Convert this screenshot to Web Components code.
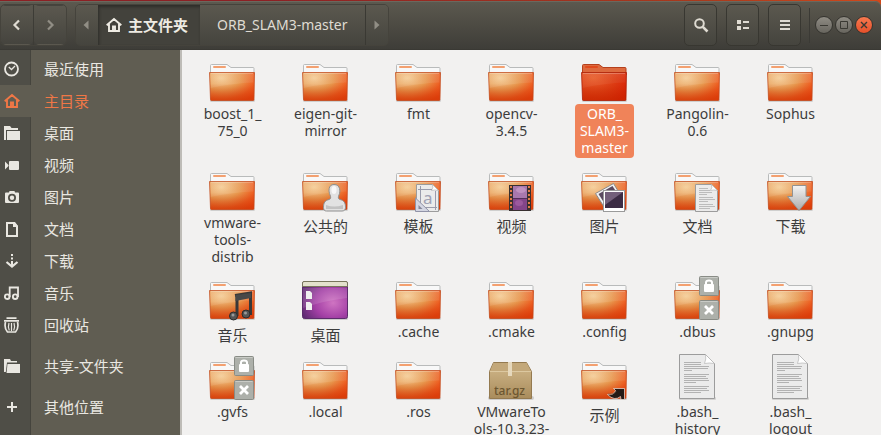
<!DOCTYPE html>
<html lang="zh-CN">
<head>
<meta charset="utf-8">
<title>主文件夹</title>
<style>
html, body { height: 100%; }
body {
   margin: 0;
   overflow: hidden;
   background: linear-gradient(90deg, #8c2024, #8c2024 30%, #a93a1c 80%, #d2481a);
   font: 15px/22px "Noto Sans", "Noto Sans CJK SC", sans-serif;
   color: #3c3c3c;
}
</style>
</head>
<body>

<file-window>
   <header-bar slot="header">
      <tool-button slot="nav" icon="back" label="后退"></tool-button>
      <tool-button slot="nav" icon="forward" label="前进" dim></tool-button>
      <path-bar slot="path">
         <path-button icon="prev" label="上一个"></path-button>
         <path-button icon="home" active>主文件夹</path-button>
         <path-button wide>ORB_SLAM3-master</path-button>
         <path-button icon="next" label="下一个"></path-button>
      </path-bar>
      <tool-button slot="tools" icon="search" label="搜索"></tool-button>
      <tool-button slot="tools" icon="list" label="列表视图"></tool-button>
      <tool-button slot="tools" icon="menu" label="菜单"></tool-button>
      <window-button slot="window" icon="minimize" label="最小化"></window-button>
      <window-button slot="window" icon="maximize" label="最大化"></window-button>
      <window-button slot="window" icon="close" label="关闭" close></window-button>
   </header-bar>

   <side-bar slot="side">
      <side-item icon="recent">最近使用</side-item>
      <side-item icon="home" active>主目录</side-item>
      <side-item icon="folder">桌面</side-item>
      <side-item icon="video">视频</side-item>
      <side-item icon="camera">图片</side-item>
      <side-item icon="doc">文档</side-item>
      <side-item icon="download">下载</side-item>
      <side-item icon="music">音乐</side-item>
      <side-item icon="trash">回收站</side-item>
      <side-item icon="share" apart>共享-文件夹</side-item>
      <side-item icon="plus" apart>其他位置</side-item>
   </side-bar>

   <file-grid>
      <file-item>boost_1_<br>75_0</file-item>
      <file-item>eigen-git-<br>mirror</file-item>
      <file-item>fmt</file-item>
      <file-item>opencv-<br>3.4.5</file-item>
      <file-item selected>ORB_<br>SLAM3-<br>master</file-item>
      <file-item>Pangolin-<br>0.6</file-item>
      <file-item>Sophus</file-item>

      <file-item>vmware-<br>tools-<br>distrib</file-item>
      <file-item mark="person" cjk>公共的</file-item>
      <file-item mark="template" cjk>模板</file-item>
      <file-item mark="film" cjk>视频</file-item>
      <file-item mark="photos" cjk>图片</file-item>
      <file-item mark="page" cjk>文档</file-item>
      <file-item mark="arrow" cjk>下载</file-item>

      <file-item mark="notes" cjk>音乐</file-item>
      <file-item kind="desktop" cjk>桌面</file-item>
      <file-item>.cache</file-item>
      <file-item>.cmake</file-item>
      <file-item>.config</file-item>
      <file-item mark="locked">.dbus</file-item>
      <file-item>.gnupg</file-item>

      <file-item mark="locked">.gvfs</file-item>
      <file-item>.local</file-item>
      <file-item>.ros</file-item>
      <file-item kind="archive">VMwareTo<br>ols-10.3.23-</file-item>
      <file-item mark="link" cjk>示例</file-item>
      <file-item kind="text">.bash_<br>history</file-item>
      <file-item kind="text">.bash_<br>logout</file-item>
   </file-grid>
</file-window>

<script>
// symbolic icons, 16x16, painted with currentColor
const icons = {
   back: `<path d="M10 3.500 5.500 8l4.500 4.500" fill="none" stroke="currentColor" stroke-width="2.200"/>`,
   forward: `<path d="M6 3.500 10.500 8 6 12.500" fill="none" stroke="currentColor" stroke-width="2.200"/>`,
   prev: `<path d="M9.500 3.500v9L4.500 8z" fill="currentColor"/>`,
   next: `<path d="M5.500 3.500v9l5-4.500z" fill="currentColor"/>`,
   home: `<path d="M.7 8.300 8 2l7.300 6.300M3 7v7h10V7M7 14V9.500h2V14" fill="none" stroke="currentColor" stroke-width="1.900"/>`,
   search: `<circle cx="6.500" cy="6.500" r="4.300" fill="none" stroke="currentColor" stroke-width="2"/><path d="m9.800 9.800 4.700 4.700" stroke="currentColor" stroke-width="2.600"/>`,
   list: `<path d="M2 3h4v4H2zM2 9h4v4H2zM8 4h6v2H8zM8 10h6v2H8z" fill="currentColor"/>`,
   menu: `<path d="M3 3h10v2H3zM3 7h10v2H3zM3 11h10v2H3z" fill="currentColor"/>`,
   minimize: `<path d="M4 8.500h8" stroke="currentColor"/>`,
   maximize: `<path d="M4.500 4.500h7v7h-7z" fill="none" stroke="currentColor"/>`,
   close: `<path d="m5 5 6 6M11 5l-6 6" stroke="currentColor" stroke-width="1.400"/>`,
   recent: `<circle cx="7.500" cy="8" r="6.500" fill="none" stroke="currentColor" stroke-width="1.800"/><path d="m4.800 6 2.700 2.500L11 5" fill="none" stroke="currentColor" stroke-width="1.300"/>`,
   folder: `<path d="M0 1h6l1.500 2H14v2H2v10H0z" fill="currentColor"/><path d="M3 6h13v9H3z" fill="currentColor"/>`,
   video: `<rect x="5" y="4" width="10" height="9" rx="1" fill="currentColor"/><path d="M1 4.500 4.500 8v1L1 12.500z" fill="currentColor"/>`,
   camera: `<path fill-rule="evenodd" d="M2 3.500h3L5.500 2h5l.5 1.500h3q1 0 1 1V13q0 1-1 1H2q-1 0-1-1V4.500q0-1 1-1zM8 4.700a4 4 0 1 0 0 8 4 4 0 0 0 0-8z" fill="currentColor"/><circle cx="8" cy="8.700" r="2.200" fill="currentColor"/>`,
   doc: `<path d="M3 2h6.500L13 5.500V15H3z" fill="none" stroke="currentColor" stroke-width="2"/><path d="M9 1h2l3 4v1H9z" fill="currentColor"/>`,
   download: `<path d="M7 1h2v2H7zM7 4.500h2v2H7zM7 8h2v4H7z" fill="currentColor"/><path d="M2.500 9 8 13.500 13.500 9" fill="none" stroke="currentColor" stroke-width="2.200"/>`,
   music: `<circle cx="3.200" cy="11.700" r="2.300" fill="none" stroke="currentColor" stroke-width="1.900"/><circle cx="11.200" cy="11.700" r="2.300" fill="none" stroke="currentColor" stroke-width="1.900"/><path d="M5.700 12V2.500h8.300V12" fill="none" stroke="currentColor" stroke-width="1.800"/>`,
   trash: `<path d="M0 3.800h15M2.500 1.200h10" stroke="currentColor" stroke-width="1.800"/><path d="M1.500 5Q0 11 3.500 15h8Q15 11 13.500 5" fill="none" stroke="currentColor" stroke-width="1.700"/><path d="M5 6Q3.700 10 5.300 13.500M10 6q1.300 4-.3 7.500M7.500 6v8" fill="none" stroke="currentColor" stroke-width="1.200"/>`,
   share: `<path d="M0 1h6l1 2h6v1.500H3L1.800 14H0z" fill="currentColor"/><path d="M3.500 6H16v9H2.500z" fill="currentColor"/>`,
   plus: `<path d="M8 3v10M3 8h10" stroke="currentColor" stroke-width="2"/>`
};

const svgIcon = name => name ? `<svg viewBox="0 0 16 16" width="16" height="16" aria-hidden="true">${icons[name]}</svg>` : "";

// full colour pictures, 47x48
const folder = selected => `
<defs>
   <radialGradient id="front" cx=".26" cy=".2" r=".95">
      ${selected
         ? `<stop offset="0" stop-color="#e85f2c"/><stop offset=".55" stop-color="#dc3a12"/><stop offset="1" stop-color="#d81a02"/>`
         : `<stop offset="0" stop-color="#f5cf98"/><stop offset=".45" stop-color="#e8984e"/><stop offset=".8" stop-color="#ee5c20"/><stop offset="1" stop-color="#f04812"/>`}
   </radialGradient>
   <linearGradient id="shade" x2="0" y2="1">
      <stop offset="0" stop-color="#fff" stop-opacity=".08"/>
      <stop offset=".4" stop-color="#c03000" stop-opacity="0"/>
      <stop offset="1" stop-color="#c03000" stop-opacity=".5"/>
   </linearGradient>
</defs>
<rect x="1" y="44" width="45" height="3" rx="1.500" fill="#000" opacity=".14"/>
<path d="M1.500 20V10.500q0-1 1-1H18l4 3h22q1 0 1 1V20z" fill="${selected ? "#dd6a3e" : "#f8f8f8"}" stroke="${selected ? "#b5401c" : "#b9bbbb"}"/>
<rect x="4" y="11" width="13" height="2" rx="1" fill="${selected ? "#e04a1c" : "#f3a070"}"/>
<path d="M.5 17.500h45l-.5 27q0 1-1 1H2.500q-1 0-1-1z" fill="url(#front)"/>
<path d="M.5 17.500h45l-.5 27q0 1-1 1H2.500q-1 0-1-1z" fill="url(#shade)" stroke="${selected ? "#a81e06" : "#c04a1c"}" stroke-opacity=".75"/>
<path d="M1.500 18.500h43v9Q25 28 1.500 33z" fill="#fff" opacity="${selected ? ".05" : ".09"}"/>
<path d="M2 18.500h42" stroke="#fff" opacity=".25"/>`;

const page = (x, y, w, h, fold) => `
<path d="M${x} ${y}h${w - fold}l${fold} ${fold}v${h - fold}h${-w}z" fill="#ebebeb" stroke="#9c9c9c"/>
<path d="M${x + w - fold} ${y}q1 ${fold / 2} -1 ${fold}q${fold / 2}-1 ${fold + 1} 0z" fill="#fff" stroke="#b4b4b4" stroke-width=".7"/>`;

const marks = {
   person: `<path d="M32 20.500c-6 0-5.500 7-4 10.500 1 2 1 4-1 4.500-4 1-5.500 3-5.500 8 0 2.500 1 3.500 3 3.500h15.500c2 0 3.500-1 3.500-3.500 0-5-1.500-7-5.500-8-2-.5-2-2.500-1-4.500 1.500-3.500 1.500-10.500-5-10.500z" fill="#e2e2e2" stroke="#8e8e8e"/><path d="M24 41q8 3 17 0v4H24z" fill="#c2c2c2"/><ellipse cx="32" cy="26" rx="2.500" ry="4" fill="#f8f8f8"/>`,
   template: page(21.5, 20.5, 22, 27, 6) + `<path d="M25.500 22v24M40.500 27v19M23 25.500h14M30 43.500h12" stroke="#9a9cac"/><text x="28" y="40" font-family="Noto Sans" font-size="17" fill="#a0a2b4">a</text><path d="M20.500 34v13.500h14z" fill="#d4d6e2" stroke="#9294a8"/><path d="M23.500 41v4h4z" fill="#85879a"/>`,
   film: `<rect x="21" y="21" width="22" height="26" fill="#383030"/><path d="M23 22v24M41 22v24" stroke="#e07a4a" stroke-width="2" stroke-dasharray="2 2"/><rect x="25" y="22" width="14" height="12" fill="#a878ae"/><path d="M25 34h14v12H25z" fill="#83458a"/><ellipse cx="33" cy="26" rx="5" ry="3" fill="#cfa2cd" opacity=".6"/><ellipse cx="31" cy="39" rx="4" ry="3" fill="#b36eb2" opacity=".5"/><path d="M25 34.500h14" stroke="#53305a"/>`,
   photos: `<path d="m14.500 29.500 18-10 8 13-17 11z" fill="#f2f2f2" stroke="#8a8a8a"/><path d="m17.500 30 14-8 7 11-14 8z" fill="#5a4a60"/><rect x="22.500" y="26.500" width="21" height="21" fill="#fff" stroke="#9a9a9a"/><rect x="24" y="28" width="18" height="16" fill="#3c2c44"/><path d="M24 28h18L24 41z" fill="#735f7a"/>`,
   page: page(21.5, 20.5, 22, 27, 6) + `<path d="M25 24.500h9M25 26.500h11M25 28.500h13M25 30.500h8M25 33.500h14M25 35.500h16M25 37.500h9M25 40.500h14M25 42.500h16M25 44.500h11" stroke="#bcbcbc"/>`,
   arrow: `<defs><linearGradient id="ar" x2="0" y2="1"><stop stop-color="#f4f4f4"/><stop offset="1" stop-color="#aaa"/></linearGradient></defs><path d="M25.500 21.500h13.500v11h4.500L32 46.500 20.500 32.500h5z" fill="url(#ar)" stroke="#929292"/>`,
   notes: `<path d="M26 22.500 41.500 20v22M28 43V24l12-2" fill="none" stroke="#383838" stroke-width="3"/><path d="m26.500 22 15.500-2v5l-15.500 3z" fill="#484848"/><circle cx="24.500" cy="43" r="4" fill="#555" stroke="#2c2c2c"/><circle cx="37" cy="41" r="4" fill="#555" stroke="#2c2c2c"/><circle cx="24" cy="42" r="1.500" fill="#999"/><circle cx="36.500" cy="40" r="1.500" fill="#999"/>`,
   locked: `<g fill="#adb0aa" stroke="#898c86"><rect x="25.500" y="3.500" width="19" height="19" rx="1"/><rect x="25.500" y="27.500" width="19" height="19" rx="1"/></g><path d="M26.500 4.500h17M26.500 28.500h17" stroke="#c9cbc6"/><rect x="30" y="11" width="10" height="8" rx="1" fill="#fff"/><path d="M32 12V9.500q0-2 3-2t3 2V12" fill="none" stroke="#fff" stroke-width="2"/><path d="m31 33 8 8M39 33l-8 8" stroke="#fff" stroke-width="2.800"/>`,
   link: `<path d="M43.500 35.500v11H40l-.5-3q-6 5-13-2 6 1 8-4l-2-2z" fill="#241a16" stroke="#f2e4dc" stroke-width=".7"/><path d="M27 41q6 1 8-3" fill="none" stroke="#8a6a58"/>`
};

const pictures = {
   desktop: `
<defs><radialGradient id="wall" cx=".68" cy=".58" r=".8"><stop stop-color="#cf74c2"/><stop offset=".5" stop-color="#a440a6"/><stop offset="1" stop-color="#54286a"/></radialGradient></defs>
<rect x="1" y="44" width="45" height="3" rx="1.500" fill="#000" opacity=".15"/>
<rect x=".5" y="8.500" width="45" height="37" rx="2" fill="url(#wall)" stroke="#5c2c6c"/>
<path d="M.5 13.500V10q0-1.500 1.500-1.500h42q1.500 0 1.500 1.500v3.500z" fill="#e3e1cc" stroke="#77755c"/>
<path d="M1 15h44v10Q25 27 1 35z" fill="#fff" opacity="0.120"/>
<path d="M4 18h4l2 2v6H4zM4 29h4l2 2v6H4z" fill="#efefef"/>`,
   archive: `
<defs><linearGradient id="box" x2="0" y2="1"><stop stop-color="#d2b98c"/><stop offset="1" stop-color="#a98c5c"/></linearGradient></defs>
<rect x="0" y="43" width="46" height="4" rx="2" fill="#000" opacity=".15"/>
<path d="M5.500 9.500h33l5 9v27h-42v-27z" fill="url(#box)" stroke="#947a50"/>
<path d="M5.500 10h33l4.500 8.500H2z" fill="#c3a87a"/>
<path d="M2 18.500h41" stroke="#dcc8a0"/>
<rect x="20" y="9" width="4" height="14" fill="#e6d8bc"/>
<text x="6" y="42" font-family="Noto Sans" font-weight="500" font-size="12" fill="#6c5630">tar.gz</text>`,
   text: `<rect x="5" y="44" width="37" height="3" rx="1" fill="#000" opacity=".12"/>` + page(5.5, 1.5, 35, 44, 9) +
      `<path d="M10 9.500h17M10 11.500h17M10 13.500h25M10 15.500h24M10 17.500h8M10 21.500h25M10 23.500h22M10 25.500h24M10 27.500h25M10 29.500h12M10 33.500h25M10 35.500h23M10 37.500h25M10 39.500h17" stroke="#b2b2b2"/>`
};

class BaseElement extends HTMLElement {
   connectedCallback(){
      if (this.shadowRoot) return;
      this.attachShadow({mode:'open'}).innerHTML = this.render();
   }
   attr(name){ return this.getAttribute(name) || "" }
}

customElements.define('file-window', class extends BaseElement {
   render(){ return `
<style>
:host { display:flex; flex-direction:column; height:100vh; }
.body { display:flex; flex:1; min-height:0; }
</style>
<slot name="header"></slot>
<div class="body"><slot name="side"></slot><slot></slot></div>`;
   }
});

customElements.define('header-bar', class extends BaseElement {
   render(){ return `
<style>
:host {
   display:block;
   box-sizing:border-box;
   margin-top:1px;
   padding:3px 8px 3px 0;
   border-bottom:1px solid #3a3934;
   border-radius:0 6px 0 0;
   background:linear-gradient(#5c594f, #3e3d38);
   box-shadow:inset 0 1px #6b685e;
   color:#dfdbd2;
}
header, nav, .tools, .win { display:flex; align-items:center; }
nav { border:1px solid #45433c; border-radius:5px; }
nav ::slotted(*) { --edge:transparent; --w:32px; --h:40px; }
nav ::slotted(:first-child) { border-right:1px solid #3d3c36; }
.path { margin-left:8px; flex:1; }
.tools { gap:9px; padding-right:8px; }
.win { gap:2px; border-left:1px solid #3b3a35; padding-left:5px; height:35px; }
</style>
<header>
   <nav><slot name="nav"></slot></nav>
   <div class="path"><slot name="path"></slot></div>
   <div class="tools"><slot name="tools"></slot></div>
   <div class="win"><slot name="window"></slot></div>
</header>`;
   }
});

customElements.define('tool-button', class extends BaseElement {
   render(){ return `
<style>
:host { display:block; }
:host([dim]) { color:#918e85; }
button {
   display:grid;
   place-items:center;
   box-sizing:border-box;
   width:var(--w, 33px);
   height:var(--h, 42px);
   padding:0;
   border:1px solid var(--edge, #383731);
   border-radius:5px;
   background:linear-gradient(#5b584f, #45443e);
   color:inherit;
}
</style>
<button type="button" aria-label="${this.attr("label")}">${svgIcon(this.attr("icon"))}</button>`;
   }
});

customElements.define('window-button', class extends BaseElement {
   render(){ return `
<style>
:host { display:block; --face:linear-gradient(#8f8c84, #67655e); }
:host([close]) { --face:linear-gradient(#f8794f, #e5502a); }
button {
   display:grid;
   place-items:center;
   box-sizing:border-box;
   width:18px;
   height:18px;
   padding:0;
   border:1px solid #35342f;
   border-radius:50%;
   background:var(--face);
   color:#3a3933;
}
</style>
<button type="button" aria-label="${this.attr("label")}">${svgIcon(this.attr("icon"))}</button>`;
   }
});

customElements.define('path-bar', class extends BaseElement {
   render(){ return `
<style>
:host { display:inline-flex; vertical-align:top; border:1px solid #45433c; border-radius:5px; overflow:hidden; }
</style>
<slot></slot>`;
   }
});

customElements.define('path-button', class extends BaseElement {
   render(){ return `
<style>
:host { display:block; --side:0 3px; --color:#918e85; }
:host([wide]) { --side:0 17px; --color:#dfdbd2; font-size:14px; }
:host([active]) { --side:0 12px 0 8px; --color:#eeebe3; font-weight:700; }
button {
   display:flex;
   align-items:center;
   gap:6px;
   height:40px;
   padding:var(--side);
   border:0;
   background:linear-gradient(#5b584f, #45443e);
   color:var(--color);
   font:inherit;
   white-space:nowrap;
}
:host([active]) button { background:#43423c; box-shadow:inset 1px 2px 3px #2e2d29; }
:host([wide]) button { border-right:1px solid #3a3933; }
</style>
<button type="button" ${this.attr("label") ? `aria-label="${this.attr("label")}"` : ""}>${svgIcon(this.attr("icon"))}<slot></slot></button>`;
   }
});

customElements.define('side-bar', class extends BaseElement {
   render(){ return `
<style>
:host {
   display:block;
   flex:none;
   box-sizing:border-box;
   width:182px;
   padding-top:3px;
   border-right:2px solid #bebcb7;
   background:linear-gradient(90deg, #4f4e47 30px, #45443d 30px, #45443d 31px, #605d52 31px);
}
</style>
<nav><slot></slot></nav>`;
   }
});

customElements.define('side-item', class extends BaseElement {
   render(){ return `
<style>
:host { display:block; color:#e9e7e1; }
:host([active]) { color:#f07746; }
:host([apart]) { margin-top:9px; }
a {
   display:flex;
   align-items:center;
   gap:24px;
   height:32px;
   padding-left:4px;
   color:inherit;
   text-decoration:none;
}
:host([active]) a { background:#605d52; }
</style>
<a href="#">${svgIcon(this.attr("icon"))}<span><slot></slot></span></a>`;
   }
});

customElements.define('file-grid', class extends BaseElement {
   render(){ return `
<style>
:host { display:block; flex:1; min-width:0; overflow:hidden; background:#f2f1f0; }
main {
   display:grid;
   grid-template-columns:repeat(auto-fill, 93px);
   row-gap:6px;
   padding:5px 0 0 4px;
}
</style>
<main><slot></slot></main>`;
   }
});

customElements.define('file-item', class extends BaseElement {
   render(){
      let base = pictures[this.attr("kind")] || folder(this.hasAttribute("selected"));
      return `
<style>
:host { display:flex; flex-direction:column; align-items:center; gap:1px; font-size:14px; line-height:17px; }
:host([cjk]) { font-size:15px; line-height:22px; }
svg { display:block; overflow:visible; }
span { padding:1px 5px 2px; border-radius:4px; text-align:center; white-space:nowrap; }
:host([cjk]) span { padding:2px 5px 1px; }
:host([selected]) span { background:#f08359; color:#fff; }
</style>
<svg viewBox="0 0 47 48" width="47" height="48" aria-hidden="true">${base}${marks[this.attr("mark")] || ""}</svg>
<span><slot></slot></span>`;
   }
});
</script>
</body>
</html>
